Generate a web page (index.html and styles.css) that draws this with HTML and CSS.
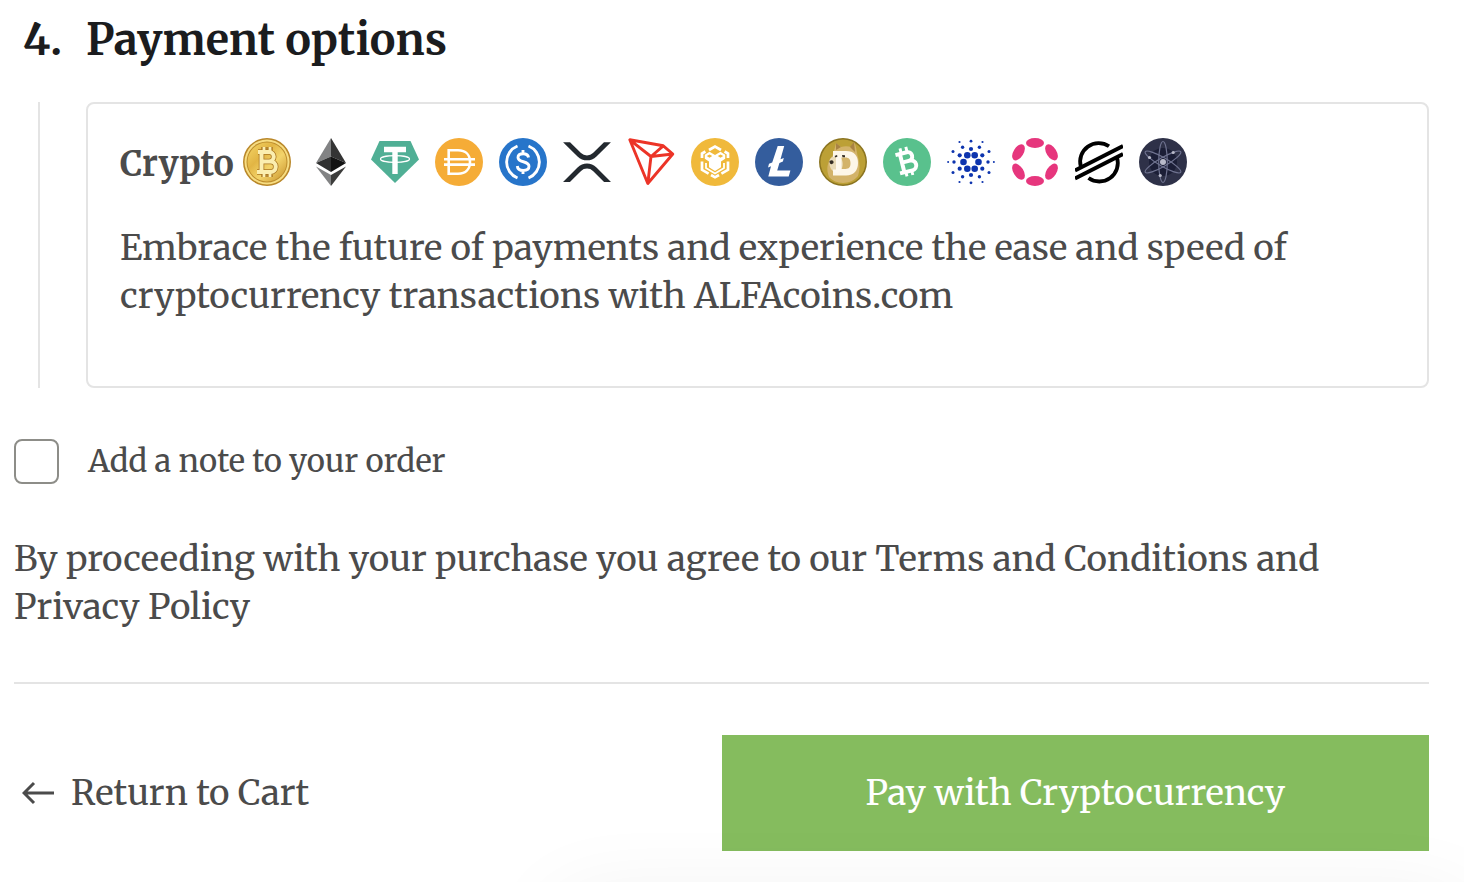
FILE: index.html
```html
<!DOCTYPE html>
<html lang="en">
<head>
<meta charset="utf-8">
<meta name="viewport" content="width=device-width, initial-scale=1">
<title>Checkout</title>
<link rel="stylesheet" href="styles.css">
</head>
<body>
<main class="checkout">
  <section class="step">
    <h2 class="step-title"><span class="step-number">4.</span>Payment options</h2>
    <div class="step-body">
      <div class="step-line"></div>
      <div class="payment-card">
        <div class="payment-head">
          <strong class="payment-name">Crypto</strong>
          <div class="coins">
            <svg class="coin" viewBox="0 0 48 48" role="img" aria-label="Bitcoin">
              <defs>
                <linearGradient id="gold" x1="0" y1="0" x2="1" y2="1"><stop offset="0" stop-color="#f6d768"/><stop offset=".35" stop-color="#e2b544"/><stop offset=".6" stop-color="#f3d46b"/><stop offset="1" stop-color="#c8912a"/></linearGradient>
              </defs>
              <circle cx="24" cy="24" r="24" fill="#b98729"/>
              <circle cx="24" cy="24" r="22.5" fill="#f7dd82"/>
              <circle cx="24" cy="24" r="20.5" fill="#bd8d2c"/>
              <circle cx="24" cy="24" r="19.5" fill="url(#gold)"/>
              <g fill="none" stroke="#a97622" stroke-width="5.5"><path d="M15 14h11a4.700 4.700 0 0 1 0 9.500H19M26 23.500h1.500a5.200 5.200 0 0 1 0 10.500H14M18.500 14v20M21 9v5M27 9v5M21 34v5M27 34v5"/></g>
              <g fill="none" stroke="#fbeeb0" stroke-width="4"><path d="M15 14h11a4.700 4.700 0 0 1 0 9.500H19M26 23.500h1.500a5.200 5.200 0 0 1 0 10.500H14M18.500 14v20"/><path stroke-width="2.800" d="M21 9v5M27 9v5M21 34v5M27 34v5"/></g>
            </svg>
            <svg class="coin" viewBox="0 0 48 48" role="img" aria-label="Ethereum">
              <path fill="#828384" d="M24 0 9 25l15-6.500z"/><path fill="#343434" d="M24 0v18.500L39 25z"/>
              <path fill="#2f3030" d="m9 25 15-6.500V34z"/><path fill="#131313" d="m39 25-15-6.500V34z"/>
              <path fill="#828384" d="m9 28.500 15 8.500v11z"/><path fill="#3c3c3b" d="M39 28.500 24 37v11z"/>
            </svg>
            <svg class="coin" viewBox="0 0 48 48" role="img" aria-label="Tether">
              <path fill="#50af95" d="M8.500 3h31L48 21.500 24 45 0 21.500z"/>
              <path fill="#fff" d="M13 8.800h22v5.400h-8.300V36h-5.400V14.200H13z"/>
              <ellipse cx="24" cy="21" rx="14.500" ry="3.300" fill="none" stroke="#fff" stroke-width="1.200"/>
            </svg>
            <svg class="coin" viewBox="0 0 48 48" role="img" aria-label="Dai">
              <circle cx="24" cy="24" r="24" fill="#f5ac37"/>
              <path fill="none" stroke="#fff" stroke-width="2.600" d="M13.700 12.300H23c8 0 12 5 12 11.700s-4 11.700-12 11.700h-9.300zM9 21.300h31M9 26.600h31"/>
            </svg>
            <svg class="coin" viewBox="0 0 48 48" role="img" aria-label="USD Coin">
              <circle cx="24" cy="24" r="24" fill="#2775ca"/>
              <g fill="none" stroke="#fff" stroke-width="2.900"><path d="M18.500 8a17.200 17.200 0 0 0 0 32M29.500 8a17.200 17.200 0 0 1 0 32"/><path d="M29.500 19.500c-.3-2.500-2.200-3.800-5.300-3.800-3.300 0-5.200 1.400-5.200 3.800 0 5.700 11 2.800 11 8.800 0 2.600-2.200 4.200-5.700 4.200-3.600 0-5.700-1.500-6-4.500M24 12v4M24 32v4"/></g>
            </svg>
            <svg class="coin" viewBox="0 0 512 512" role="img" aria-label="XRP">
              <g fill="#23292f" transform="translate(0 44)"><path d="M437 0h74L357 152.480c-55.770 55.190-146.190 55.190-202 0L.94 0H75l117 115.830a91.110 91.110 0 0 0 127.910 0z"/><path d="M74.050 424H0l155-153.420c55.770-55.190 146.190-55.190 202 0L512 424h-74L320 307.230a91.110 91.110 0 0 0-127.910 0z"/></g>
            </svg>
            <svg class="coin" viewBox="0 0 48 48" role="img" aria-label="Tron">
              <path fill="none" stroke="#ec3427" stroke-width="2.900" stroke-linejoin="round" d="m2.800 1.800 33.500 6L45.800 16 20.800 45.500zL24 18.500l12.300-10.700M24 18.500 45.800 16M24 18.500l-3.200 27"/>
            </svg>
            <svg class="coin" viewBox="0 0 48 48" role="img" aria-label="BNB">
              <circle cx="24" cy="24" r="24" fill="#f0b93b"/>
              <g fill="none" stroke="#fff" stroke-width="2.700"><path d="M18 12 24 8.500l6 3.500M11 20v-4.500l3.400-2M37 20v-4.500l-3.400-2M11 23.500v8.300l6.600 3.800M37 23.500v8.300l-6.600 3.800M20 37l4 2.300 4-2.300"/></g>
              <path fill="#fff" fill-rule="evenodd" d="m18.500 13.800 5.500 3.200 5.500-3.200 4.700 2.900v4L30 23.500v5.800L24 33l-6-3.700v-5.800l-4.200-2.800v-4zm0 2.600-2.700 1.600 2.700 1.800 2.700-1.800zm11 0-2.700 1.600 2.700 1.800 2.700-1.800z"/>
              <path fill="none" stroke="#fff" stroke-width="1.800" d="M15 25v5l9 5.500 9-5.500v-5"/>
            </svg>
            <svg class="coin" viewBox="0 0 48 48" role="img" aria-label="Litecoin">
              <circle cx="24" cy="24" r="24" fill="#345d9d"/>
              <path fill="#fff" d="M22.700 8h6.500l-3.700 13.300 3.300-1.300-.9 3.600-3.500 1.300-2.200 7.500h13.200L33.700 38.500H13.300l2.700-10.200-3 1.200 1-3.700 3.200-1.200z"/>
            </svg>
            <svg class="coin" viewBox="0 0 48 48" role="img" aria-label="Dogecoin">
              <circle cx="24" cy="24" r="24" fill="#8b7420"/><circle cx="24" cy="24" r="22.500" fill="#bca036"/>
              <path fill="#d3b36a" d="M14 17 17 5l5 4c4-1.300 7-1 10 0l3-5c3 6 2.500 10 4 15 2 7 2 13 0 19-7 9-22 9-29 1-3-8-2-15 4-22z"/>
              <path fill="#a98343" d="m17 5 5 4-5 3zM35 4l1 10-5-5z"/>
              <path fill="#eadbb8" d="M11 21c5-5 10-4 12 1s0 11-5 13c-6-1-9-8-7-14z"/>
              <path fill="#fffaf0" fill-opacity=".94" fill-rule="evenodd" d="M14 13h13c8 0 12 4.500 12 12s-4 12.500-12 12.500H14v-6h3V19h-3zm8.500 6.500v11.500h4c3.500 0 5-2 5-5.700s-1.500-5.800-5-5.800z"/>
              <path fill="#342c23" d="M10.500 23c2.500-1.500 4.500-.5 4 2-1.500 2-4 1.500-4-2zM15.500 18l2.500-1 .5 1.500-2 1zM23 17l3 .2v2h-2.500z"/>
            </svg>
            <svg class="coin" viewBox="0 0 48 48" role="img" aria-label="Bitcoin Cash">
              <circle cx="24" cy="24" r="24" fill="#59c18d"/>
              <g transform="rotate(-14 24 24)" fill="none" stroke="#fff" stroke-width="4"><path d="M14.500 14.500H26a4.300 4.300 0 0 1 0 8.900h-6M26 23.400h1.300a5 5 0 0 1 0 10H14.500M19 14v19"/><path stroke-width="2.900" d="M20.500 9v5M26.500 9v5M20.500 33v5M26.500 33v5"/></g>
            </svg>
            <svg class="coin" viewBox="0 0 48 48" role="img" aria-label="Cardano">
              <g fill="#0d34ae"><circle cx="20.300" cy="17.300" r="3.300"/><circle cx="27.700" cy="17.300" r="3.300"/><circle cx="16.500" cy="24" r="3.300"/><circle cx="31.500" cy="24" r="3.300"/><circle cx="20.300" cy="30.700" r="3.300"/><circle cx="27.700" cy="30.700" r="3.300"/>
              <circle cx="24" cy="11" r="2.100"/><circle cx="12.700" cy="17.300" r="2.100"/><circle cx="35.300" cy="17.300" r="2.100"/><circle cx="12.700" cy="30.700" r="2.100"/><circle cx="35.300" cy="30.700" r="2.100"/><circle cx="24" cy="37" r="2.100"/>
              <circle cx="15.600" cy="9.200" r="1.700"/><circle cx="32.400" cy="9.200" r="1.700"/><circle cx="7" cy="24" r="1.700"/><circle cx="41" cy="24" r="1.700"/><circle cx="15.600" cy="38.800" r="1.700"/><circle cx="32.400" cy="38.800" r="1.700"/>
              <circle cx="24" cy="3.200" r="1.400"/><circle cx="6" cy="13.500" r="1.500"/><circle cx="42" cy="13.500" r="1.500"/><circle cx="6" cy="34.500" r="1.500"/><circle cx="42" cy="34.500" r="1.500"/><circle cx="24" cy="44.800" r="1.400"/>
              <circle cx="12.500" cy="4" r="1.100"/><circle cx="35.500" cy="4" r="1.100"/><circle cx="1.100" cy="24" r="1"/><circle cx="46.900" cy="24" r="1"/><circle cx="12.500" cy="44" r="1.100"/><circle cx="35.500" cy="44" r="1.100"/></g>
            </svg>
            <svg class="coin" viewBox="0 0 48 48" role="img" aria-label="Polkadot">
              <g fill="#e6367d"><ellipse cx="24" cy="5" rx="9" ry="5"/><ellipse cx="24" cy="43" rx="9" ry="5"/><ellipse cx="7.500" cy="14.300" rx="9" ry="5" transform="rotate(-58 7.500 14.300)"/><ellipse cx="40.500" cy="14.300" rx="9" ry="5" transform="rotate(58 40.500 14.300)"/><ellipse cx="7.500" cy="33.700" rx="9" ry="5" transform="rotate(58 7.500 33.700)"/><ellipse cx="40.500" cy="33.700" rx="9" ry="5" transform="rotate(-58 40.500 33.700)"/></g>
            </svg>
            <svg class="coin" viewBox="0 0 48 48" role="img" aria-label="Stellar">
              <g fill="none" stroke="#000" stroke-width="3.800"><path d="m0 32.500 48-24.500M0 40.500 48 16"/><path d="M5.800 28.500A18.500 18.500 0 0 1 34 8.300M42 19.500A18.500 18.500 0 0 1 13.500 40"/></g>
            </svg>
            <svg class="coin" viewBox="0 0 48 48" role="img" aria-label="Cosmos">
              <circle cx="24" cy="24" r="24" fill="#2e3148"/><circle cx="24" cy="24" r="14" fill="#1b1e36"/>
              <g fill="none" stroke="#6f7390" stroke-width="1.200"><ellipse cx="24" cy="24" rx="4.300" ry="20.500"/><ellipse cx="24" cy="24" rx="4.300" ry="20.500" transform="rotate(60 24 24)"/><ellipse cx="24" cy="24" rx="4.300" ry="20.500" transform="rotate(-60 24 24)"/></g>
              <g fill="#b9bbca"><circle cx="24" cy="24" r="3"/><circle cx="34.200" cy="14.500" r="1.600"/><circle cx="10.500" cy="19.500" r="1.600"/><circle cx="21.200" cy="37.500" r="1.600"/></g>
            </svg>
          </div>
        </div>
        <p class="payment-text">Embrace the future of payments and experience the ease and speed of cryptocurrency transactions with ALFAcoins.com</p>
      </div>
    </div>
  </section>
  <label class="note"><input class="note-box" type="checkbox">Add a note to your order</label>
  <p class="terms">By proceeding with your purchase you agree to our Terms and Conditions and Privacy Policy</p>
  <div class="actions">
    <a class="back" href="#cart"><svg class="back-arrow" viewBox="0 0 32 24" aria-hidden="true"><path d="M32 12H2M12 2 2 12l10 10"/></svg>Return to Cart</a>
    <button class="pay" type="button">Pay with Cryptocurrency</button>
  </div>
</main>
<div class="drawer" aria-hidden="true"></div>
</body>
</html>
```
FILE: styles.css
```css
*, *::before, *::after { box-sizing: border-box; }

body {
  margin: 0;
  overflow-x: hidden;
  background: #fff;
  color: #4b4b4b;
  font-family: Merriweather, "DejaVu Serif Condensed", "DejaVu Serif", serif;
  font-size: 35px;
  font-weight: 450;
  line-height: 48px;
}

.checkout { padding: 12px 35px 30px 14px; }

.step-title {
  display: flex;
  margin: 0 0 34px;
  color: #1b1c1e;
  font-size: 43px;
  font-weight: 750;
  line-height: 56px;
}
.step-number { flex: 0 0 72px; padding-left: 9px; }

.step-body { display: flex; }
.step-line { flex: 0 0 26px; margin-right: 46px; border-right: 2px solid #e4e4e4; }
.payment-card {
  flex: 1;
  min-width: 0;
  padding: 34px 32px 66px;
  border: 2px solid #e4e4e4;
  border-radius: 8px;
}
.payment-head { display: flex; align-items: flex-start; gap: 9px; margin-bottom: 36px; }
.payment-name { padding-top: 2px; font-size: 34px; font-weight: 700; }
.coins { display: flex; flex-wrap: wrap; gap: 16px; }
.coin { display: block; width: 48px; height: 48px; }
.payment-text { margin: 0; }

.note {
  display: flex;
  align-items: center;
  gap: 29px;
  margin-top: 49px;
  font-size: 31px;
}
.note-box {
  width: 45px;
  height: 45px;
  margin: 0;
  border: 2px solid #8d8d88;
  border-radius: 8px;
  background: #fff;
  appearance: none;
}
.note-box:checked { background: #85bc5e; }

.terms { margin: 50px 0 51px; }

.actions {
  display: grid;
  grid-template-columns: 1fr 1fr;
  align-items: center;
  padding-top: 51px;
  border-top: 2px solid #e4e4e4;
}
.back {
  display: flex;
  align-items: center;
  gap: 17px;
  padding-left: 8px;
  color: inherit;
  text-decoration: none;
}
.back-arrow {
  width: 32px;
  height: 24px;
  fill: none;
  stroke: currentColor;
  stroke-width: 3;
}
.pay {
  padding: 34px 24px;
  border: 0;
  background: #85bc5e;
  color: #fff;
  font: inherit;
}

.drawer {
  position: fixed;
  top: 100%;
  right: 0;
  left: 560px;
  height: 200px;
  box-shadow: 0 20px 90px rgba(0, 0, 0, 0.07);
}
```
